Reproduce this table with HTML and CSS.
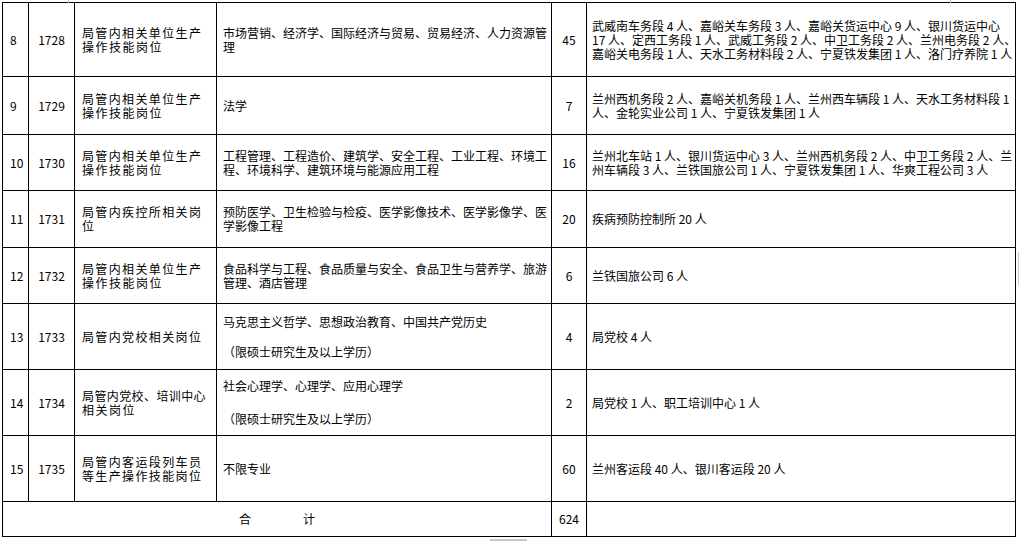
FILE: index.html
```html
<!DOCTYPE html>
<html lang="zh-CN">
<head>
<meta charset="utf-8">
<title>岗位表</title>
<link rel="stylesheet" href="styles.css">
</head>
<body>
<div class="sheet">
<table class="grid">
<colgroup><col class="c-no"><col class="c-code"><col class="c-post"><col class="c-major"><col class="c-num"><col class="c-unit"></colgroup>
<tbody>
<tr class="r-a">
<td class="no">8</td><td class="code">1728</td>
<td class="post"><div class="just">局管内相关单位生产</div><div>操作技能岗位</div></td>
<td class="major"><div>市场营销、经济学、国际经济与贸易、贸易经济、人力资源管</div><div>理</div></td>
<td class="num">45</td>
<td class="unit"><div>武威南车务段 4 人、嘉峪关车务段 3 人、嘉峪关货运中心 9 人、银川货运中心</div><div>17 人、定西工务段 1 人、武威工务段 2 人、中卫工务段 2 人、兰州电务段 2 人、</div><div>嘉峪关电务段 1 人、天水工务材料段 2 人、宁夏铁发集团 1 人、洛门疗养院 1 人</div></td>
</tr>
<tr class="r-b">
<td class="no">9</td><td class="code">1729</td>
<td class="post"><div class="just">局管内相关单位生产</div><div>操作技能岗位</div></td>
<td class="major">法学</td>
<td class="num">7</td>
<td class="unit"><div>兰州西机务段 2 人、嘉峪关机务段 1 人、兰州西车辆段 1 人、天水工务材料段 1</div><div>人、金轮实业公司 1 人、宁夏铁发集团 1 人</div></td>
</tr>
<tr class="r-c">
<td class="no">10</td><td class="code">1730</td>
<td class="post"><div class="just">局管内相关单位生产</div><div>操作技能岗位</div></td>
<td class="major"><div>工程管理、工程造价、建筑学、安全工程、工业工程、环境工</div><div>程、环境科学、建筑环境与能源应用工程</div></td>
<td class="num">16</td>
<td class="unit"><div>兰州北车站 1 人、银川货运中心 3 人、兰州西机务段 2 人、中卫工务段 2 人、兰</div><div>州车辆段 3 人、兰铁国旅公司 1 人、宁夏铁发集团 1 人、华爽工程公司 3 人</div></td>
</tr>
<tr class="r-d">
<td class="no">11</td><td class="code">1731</td>
<td class="post"><div class="just">局管内疾控所相关岗</div><div>位</div></td>
<td class="major"><div>预防医学、卫生检验与检疫、医学影像技术、医学影像学、医</div><div>学影像工程</div></td>
<td class="num">20</td>
<td class="unit">疾病预防控制所 20 人</td>
</tr>
<tr class="r-c">
<td class="no">12</td><td class="code">1732</td>
<td class="post"><div class="just">局管内相关单位生产</div><div>操作技能岗位</div></td>
<td class="major"><div>食品科学与工程、食品质量与安全、食品卫生与营养学、旅游</div><div>管理、酒店管理</div></td>
<td class="num">6</td>
<td class="unit">兰铁国旅公司 6 人</td>
</tr>
<tr class="r-e">
<td class="no">13</td><td class="code">1733</td>
<td class="post"><div class="just">局管内党校相关岗位</div></td>
<td class="major"><div>马克思主义哲学、思想政治教育、中国共产党历史</div><div class="note">（限硕士研究生及以上学历）</div></td>
<td class="num">4</td>
<td class="unit">局党校 4 人</td>
</tr>
<tr class="r-e">
<td class="no">14</td><td class="code">1734</td>
<td class="post"><div class="tight">局管内党校、培训中心</div><div>相关岗位</div></td>
<td class="major"><div>社会心理学、心理学、应用心理学</div><div class="note wide">（限硕士研究生及以上学历）</div></td>
<td class="num">2</td>
<td class="unit">局党校 1 人、职工培训中心 1 人</td>
</tr>
<tr class="r-e">
<td class="no">15</td><td class="code">1735</td>
<td class="post"><div class="just">局管内客运段列车员</div><div class="just">等生产操作技能岗位</div></td>
<td class="major">不限专业</td>
<td class="num">60</td>
<td class="unit">兰州客运段 40 人、银川客运段 20 人</td>
</tr>
<tr class="r-total">
<td class="total" colspan="4">合<span class="gap"></span>计</td>
<td class="num">624</td>
<td class="unit"></td>
</tr>
</tbody>
</table>
</div>
<div class="mark mark-top-a"></div>
<div class="mark mark-top-b"></div>
<div class="mark mark-right"></div>
<div class="mark mark-bottom"></div>
</body>
</html>
```

FILE: styles.css
```css
html, body {
  margin: 0;
  padding: 0;
  background: #fff;
}
body {
  font-family: "Noto Sans CJK SC", "Noto Sans", sans-serif;
  font-size: 12px;
  line-height: 14px;
  color: #000;
  width: 1019px;
  height: 541px;
  overflow: hidden;
  position: relative;
}
.sheet {
  padding: 2px 0 0 2px;
}
.grid {
  border-collapse: collapse;
  table-layout: fixed;
  width: 1013px;
}
.c-no { width: 26px; }
.c-code { width: 46px; }
.c-post { width: 142px; }
.c-major { width: 335px; }
.c-num { width: 35px; }
.c-unit { width: 429px; }
.grid td {
  border: 1px solid #000;
  padding: 0;
  vertical-align: middle;
  white-space: nowrap;
  overflow: hidden;
}
.r-a { height: 74px; }
.r-b { height: 58px; }
.r-c { height: 56px; }
.r-d { height: 57px; }
.r-e { height: 66px; }
.r-total { height: 35px; }
.no { padding-left: 7px !important; }
.code { text-align: center; }
.post {
  padding-left: 7px !important;
  letter-spacing: 1.5px;
}
.post .just {
  width: 120px;
  text-align: justify;
  text-align-last: justify;
  letter-spacing: 1px;
}
.post .tight { letter-spacing: 0.4px; }
.major { padding-left: 6px !important; }
.major .note { margin-top: 16px; }
.major .note.wide { margin-top: 19px; }
.num { text-align: center; }
.unit { padding-left: 5px !important; }
.total { text-align: center; }
.gap {
  display: inline-block;
  width: 52px;
}
.mark {
  position: absolute;
  background: #c8c8c8;
}
.mark-top-a { left: 68px; top: 0; width: 1px; height: 3px; }
.mark-top-b { left: 950px; top: 0; width: 1px; height: 3px; }
.mark-right { left: 1018px; top: 252px; width: 1px; height: 33px; }
.mark-bottom { left: 490px; top: 539px; width: 37px; height: 2px; }
```
